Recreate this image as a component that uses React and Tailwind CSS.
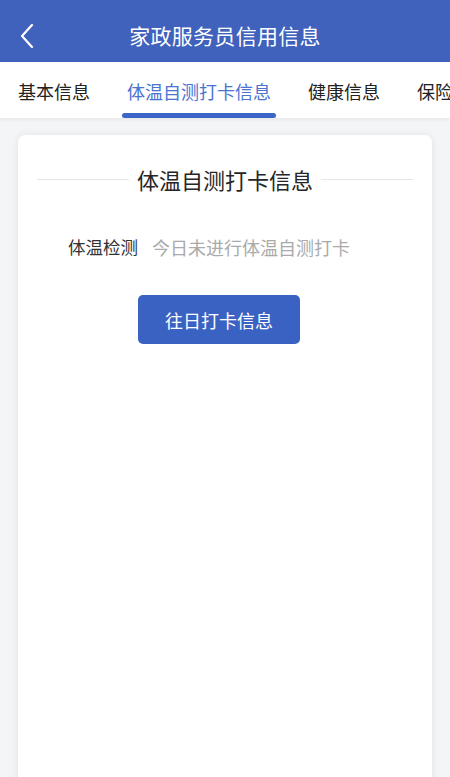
import React from "react";

const font = { fontFamily: '"Noto Sans CJK SC", "Noto Sans", sans-serif' };

export default function App() {
  return (
    <div
      className="w-[450px] h-[777px] overflow-hidden flex flex-col bg-[#f4f5f7]"
      style={font}
    >
      {/* Header */}
      <div className="relative h-[62px] shrink-0 bg-[#4062bd] flex items-center justify-center">
        <svg
          className="absolute left-[19px] top-[23px]"
          width="16"
          height="26"
          viewBox="0 0 16 26"
          fill="none"
        >
          <path
            d="M13 2 L3 13 L13 24"
            stroke="#ffffff"
            strokeWidth="2.2"
            strokeLinecap="round"
            strokeLinejoin="round"
          />
        </svg>
        <span className="text-white text-[21px] leading-none tracking-[0.3px] mt-[9px]">
          家政服务员信用信息
        </span>
      </div>

      {/* Tabs */}
      <div className="relative h-[56px] shrink-0 bg-white flex items-center pl-[18px] gap-[37px] overflow-hidden whitespace-nowrap shadow-[0_2px_4px_rgba(0,0,0,0.06)] z-10">
        <span className="text-[18px] leading-none text-[#222] shrink-0 mt-[1px]">基本信息</span>
        <span className="relative text-[18px] leading-none text-[#4a74d0] shrink-0 mt-[1px]">
          体温自测打卡信息
          <span className="absolute left-[-5px] right-[-5px] top-[31px] h-[5px] rounded-full bg-[#3b66c8]" />
        </span>
        <span className="text-[18px] leading-none text-[#222] shrink-0 mt-[1px]">健康信息</span>
        <span className="text-[18px] leading-none text-[#222] shrink-0 mt-[1px]">保险信息</span>
      </div>

      {/* Content */}
      <div className="flex-1 px-[18px] pt-[17px] flex flex-col">
        <div className="flex-1 mb-[-20px] bg-white rounded-[7px] shadow-[0_0_8px_rgba(0,0,0,0.08)] flex flex-col items-center">
          <div className="w-full flex items-center px-[19px] pt-[33px]">
            <div className="flex-1 h-px bg-[#e6e6e6]" />
            <span className="px-[8px] text-[22px] leading-none text-[#262626]">
              体温自测打卡信息
            </span>
            <div className="flex-1 h-px bg-[#e6e6e6]" />
          </div>

          <div className="w-full flex items-center pl-[50px] pt-[48px] gap-[14px]">
            <span className="text-[17.5px] leading-none text-[#333]">体温检测</span>
            <span className="text-[18px] leading-none text-[#aaaaaa]">今日未进行体温自测打卡</span>
          </div>

          <button className="mt-[39px] ml-[-12px] w-[162px] h-[49px] rounded-[5px] bg-[#3a62c3] text-white text-[18px] leading-none flex items-center justify-center">
            往日打卡信息
          </button>
        </div>
      </div>
    </div>
  );
}
